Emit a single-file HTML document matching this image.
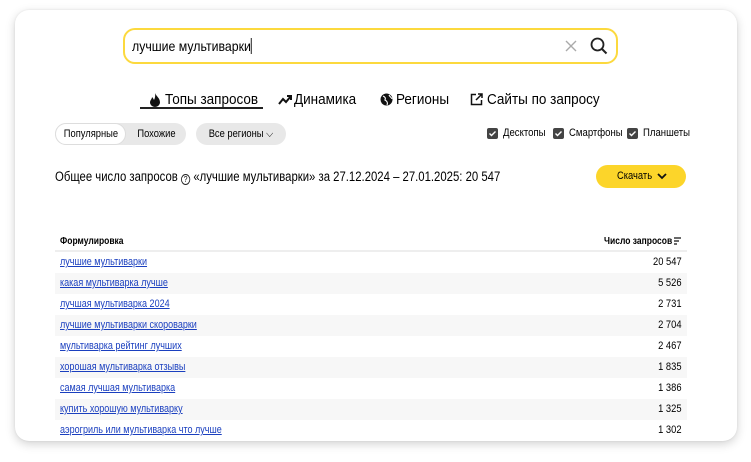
<!DOCTYPE html>
<html><head><meta charset="utf-8"><style>
*{margin:0;padding:0;box-sizing:border-box}
body{width:751px;height:462px;background:#fff;font-family:"Liberation Sans",sans-serif;color:#000;position:relative;overflow:hidden}
.card{position:absolute;left:15px;top:10px;width:722px;height:431px;background:#fff;border-radius:14px;box-shadow:0 3px 10px rgba(0,0,0,.18),0 0 2px rgba(0,0,0,.08)}
.a{position:absolute;white-space:nowrap}
.n{transform-origin:0 50%}
.search{left:123px;top:28px;width:495px;height:36px;border:2px solid #fcd93e;border-radius:12px}
.tab{font-size:15px;top:91px;transform:scaleX(.9);transform-origin:0 50%}
.chip{top:123px;height:22px;font-size:11px;line-height:22px;text-align:center;border-radius:11px}
.chip i{font-style:normal;display:inline-block;transform:scaleX(.85)}
.cb{top:128px;width:11px;height:11px;background:#444;border-radius:2px}
.cbl{top:127px;font-size:11px;transform:scaleX(.87);transform-origin:0 50%}
.row{position:absolute;left:55px;width:632px;height:21px;font-size:11px;line-height:21px}
.row a{position:absolute;left:5px;color:#1a3fbf;text-decoration:underline;transform:scaleX(.82);transform-origin:0 50%}
.row span{position:absolute;right:5px;transform:scaleX(.85);transform-origin:100% 50%}
.alt{background:#f7f7f7}
</style></head><body>
<div class="card"></div>
<div class="a search"></div>
<div class="a n" style="left:132px;top:38px;font-size:14px;transform:scaleX(.88)">лучшие мультиварки<span style="display:inline-block;width:1px;height:16px;background:#000;vertical-align:-3px"></span></div>
<svg class="a" style="left:565px;top:40px" width="12" height="12"><path d="M1 1L11 11M11 1L1 11" stroke="#aaa" stroke-width="1.4"/></svg>
<svg class="a" style="left:590px;top:37px" width="18" height="18"><circle cx="7.5" cy="7.5" r="6" fill="none" stroke="#222" stroke-width="1.8"/><path d="M12 12L16.5 16.5" stroke="#222" stroke-width="2"/></svg>

<svg class="a" style="left:149px;top:93px" width="12" height="14"><path d="M6 0C7 3 11 5 11 9.5A5 4.5 0 0 1 1 9.5C1 7 3 6 3 4C4 5 4.5 6 5 7C6 5 6.5 3 6 0Z" fill="#111"/></svg>
<div class="a tab" style="left:165px">Топы запросов</div>
<div class="a" style="left:140px;top:107px;width:123px;height:2px;background:#222"></div>
<svg class="a" style="left:278px;top:94px" width="14" height="12"><path d="M1 10L5 5L8 8L13 2M9 2H13V6" fill="none" stroke="#111" stroke-width="2"/></svg>
<div class="a tab" style="left:294px">Динамика</div>
<svg class="a" style="left:380px;top:93px" width="13" height="13"><circle cx="6.5" cy="6.5" r="6" fill="#111"/><path d="M3 3C5 4 6 5 5 7C7 8 8 10 7 12M9 2C10 4 12 5 12 6" fill="none" stroke="#fff" stroke-width="1.2"/></svg>
<div class="a tab" style="left:396px">Регионы</div>
<svg class="a" style="left:470px;top:93px" width="13" height="13"><path d="M6 1.5H1.5V11.5H11.5V7M8 1H12V5M12 1L6 7" fill="none" stroke="#111" stroke-width="1.5"/></svg>
<div class="a tab" style="left:487px">Сайты по запросу</div>

<div class="a chip" style="left:55px;width:131px;background:#e8e8e8"></div>
<div class="a chip" style="left:55px;width:71px;background:#fff;border:1px solid #ddd;line-height:20px"><i>Популярные</i></div>
<div class="a chip" style="left:126px;width:60px"><i>Похожие</i></div>
<div class="a chip" style="left:196px;width:90px;background:#e8e8e8"><i>Все регионы ⌵</i></div>

<div class="a cb" style="left:487px"></div><div class="a cbl" style="left:503px">Десктопы</div>
<div class="a cb" style="left:553px"></div><div class="a cbl" style="left:569px">Смартфоны</div>
<div class="a cb" style="left:627px"></div><div class="a cbl" style="left:643px">Планшеты</div>
<svg class="a" style="left:487px;top:128px" width="160" height="11"><path d="M2.5 5.5L4.5 7.5L8.5 3.5M68.5 5.5L70.5 7.5L74.5 3.5M142.5 5.5L144.5 7.5L148.5 3.5" fill="none" stroke="#fff" stroke-width="1.4"/></svg>

<div class="a n" style="left:55px;top:169px;font-size:13.5px;transform:scaleX(.84)">Общее число запросов <span style="display:inline-block;width:11px;height:11px;border:1.2px solid #222;border-radius:50%;font-size:8px;line-height:9px;text-align:center;vertical-align:-1px">?</span> «лучшие мультиварки» за 27.12.2024 – 27.01.2025: 20 547</div>
<div class="a" style="left:596px;top:165px;width:90px;height:23px;background:#fcd52a;border-radius:12px"></div>
<div class="a n" style="left:617px;top:165px;font-size:11px;line-height:23px;transform:scaleX(.85)">Скачать</div>
<svg class="a" style="left:657px;top:173px" width="10" height="7"><path d="M1 1L5 5L9 1" fill="none" stroke="#111" stroke-width="1.8"/></svg>

<div class="a n" style="left:60px;top:236px;font-size:10px;font-weight:bold;transform:scaleX(.85)">Формулировка</div>
<div class="a" style="right:79px;top:236px;font-size:10px;font-weight:bold;transform:scaleX(.85);transform-origin:100% 50%">Число запросов</div>
<svg class="a" style="left:674px;top:237px" width="8" height="8"><path d="M0 1H7M0 4H5M0 7H3" stroke="#111" stroke-width="1.2"/></svg>
<div class="a" style="left:55px;top:250px;width:632px;height:2px;background:#eee"></div>

<div class="row" style="top:252px"><a>лучшие мультиварки</a><span>20 547</span></div>
<div class="row alt" style="top:273px"><a>какая мультиварка лучше</a><span>5 526</span></div>
<div class="row" style="top:294px"><a>лучшая мультиварка 2024</a><span>2 731</span></div>
<div class="row alt" style="top:315px"><a>лучшие мультиварки скороварки</a><span>2 704</span></div>
<div class="row" style="top:336px"><a>мультиварка рейтинг лучших</a><span>2 467</span></div>
<div class="row alt" style="top:357px"><a>хорошая мультиварка отзывы</a><span>1 835</span></div>
<div class="row" style="top:378px"><a>самая лучшая мультиварка</a><span>1 386</span></div>
<div class="row alt" style="top:399px"><a>купить хорошую мультиварку</a><span>1 325</span></div>
<div class="row" style="top:420px"><a>аэрогриль или мультиварка что лучше</a><span>1 302</span></div>
</body></html>
